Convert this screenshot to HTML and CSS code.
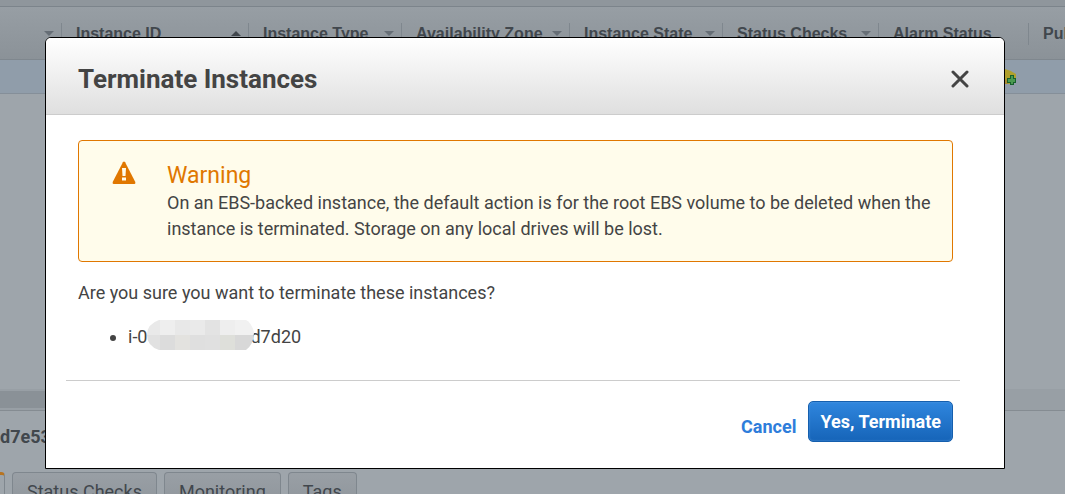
FILE: index.html
```
<!DOCTYPE html>
<html lang="en">
<head>
<meta charset="utf-8">
<title>Terminate Instances</title>
<meta name="viewport" content="width=device-width, initial-scale=1">
<link rel="stylesheet" href="styles.css">
</head>
<body>
<div class="console">
  <div class="toolbar"></div>
  <table class="grid">
    <colgroup>
      <col class="col-name"><col class="col-id"><col class="col-type"><col class="col-zone"><col class="col-state"><col class="col-checks"><col class="col-alarm"><col>
    </colgroup>
    <thead>
      <tr>
        <th scope="col" aria-label="Name"><div class="head"><span></span><i class="sort"></i></div></th>
        <th scope="col"><div class="head"><span>Instance ID</span><i class="sort up"></i></div></th>
        <th scope="col"><div class="head"><span>Instance Type</span><i class="sort"></i></div></th>
        <th scope="col"><div class="head"><span>Availability Zone</span><i class="sort"></i></div></th>
        <th scope="col"><div class="head"><span>Instance State</span><i class="sort"></i></div></th>
        <th scope="col"><div class="head"><span>Status Checks</span><i class="sort"></i></div></th>
        <th scope="col"><div class="head"><span>Alarm Status</span></div></th>
        <th scope="col"><div class="head last"><span>Public DNS</span></div></th>
      </tr>
    </thead>
    <tbody>
      <tr>
        <td></td><td></td><td></td><td></td><td></td><td></td>
        <td class="alarm">
          <svg class="bell" width="20" height="18" viewBox="0 0 20 18" aria-hidden="true">
            <path d="M1 16V8Q2 1 9 1Q14 2 20 6V12L14 16Z" fill="#b0a02c"/>
            <path d="M1 16V13L12 11V16Z" fill="#a98a32"/>
            <path d="M14 7h4v3h2v5h-2v2h-4v-2h-3v-5h3Z" fill="#17602d"/>
            <path d="M15 8h2v3h2v3h-2v2h-2v-2h-3v-3h3Z" fill="#4a9a50"/>
          </svg>
        </td>
        <td></td>
      </tr>
    </tbody>
  </table>
  <div class="empty"></div>
  <div class="scrollbar"><div class="thumb"></div></div>
  <section class="details">
    <p class="selected">d7e53</p>
    <nav class="tabs">
      <span class="tab current"></span>
      <a class="tab" href="#checks">Status Checks</a>
      <a class="tab" href="#monitoring">Monitoring</a>
      <a class="tab" href="#tags">Tags</a>
    </nav>
  </section>
</div>

<div class="overlay">
  <div class="dialog" role="dialog" aria-modal="true" aria-labelledby="dialog-title">
    <header class="dialog-head">
      <h1 id="dialog-title">Terminate Instances</h1>
      <button class="close" type="button" aria-label="Close">
        <svg width="18" height="18" viewBox="0 0 18 18" aria-hidden="true"><path d="M2 2L16 16M16 2L2 16" stroke="#444" stroke-width="3" stroke-linecap="round"/></svg>
      </button>
    </header>
    <div class="dialog-body">
      <div class="warning" role="alert">
        <svg class="warning-icon" width="24" height="24" viewBox="0 0 24 24" aria-hidden="true">
          <path d="M10.900 1.200Q12 0 13.100 1.200L23.300 21Q23.700 23 22.500 23H1.500Q.3 23 .7 21Z" fill="#e07700"/>
          <path d="M10 7h4l-.5 8h-3ZM10 16.500h4v3h-4Z" fill="#fffceb"/>
        </svg>
        <div>
          <h2>Warning</h2>
          <p>On an EBS-backed instance, the default action is for the root EBS volume to be deleted when the instance is terminated. Storage on any local drives will be lost.</p>
        </div>
      </div>
      <p class="question">Are you sure you want to terminate these instances?</p>
      <ul class="instances">
        <li><span class="instance"><span>i-0</span><svg class="mask" width="107" height="30" viewBox="0 0 107 30" aria-hidden="true">
          <defs><clipPath id="pill"><path d="M12 0H99Q104 2 107 12Q107 24 99 30H12Q0 26 0 15Q0 4 12 0Z"/></clipPath></defs>
          <g clip-path="url(#pill)">
            <path d="M0 0h13v15H0Z" fill="#e9e9e9"/><path d="M13 0h15v15H13Z" fill="#eee"/><path d="M28 0h15v15H28Z" fill="#e8e8e8"/><path d="M43 0h15v15H43Z" fill="#eaeaea"/><path d="M58 0h15v15H58Z" fill="#e3e3e3"/><path d="M73 0h15v15H73Z" fill="#eee"/><path d="M88 0h19v15H88Z" fill="#f1f1f1"/>
            <path d="M0 15h13v15H0Z" fill="#e1e1e1"/><path d="M13 15h15v15H13Z" fill="#dcdcdc"/><path d="M28 15h15v15H28Z" fill="#e3e2df"/><path d="M43 15h15v15H43Z" fill="#dfdfdf"/><path d="M58 15h15v15H58Z" fill="#e0e0e0"/><path d="M73 15h15v15H73Z" fill="#dedfda"/><path d="M88 15h19v15H88Z" fill="#d8d8d8"/>
          </g>
        </svg><span class="tail">d7d20</span></span></li>
      </ul>
    </div>
    <footer class="dialog-foot">
      <a class="cancel" href="#cancel">Cancel</a>
      <button class="confirm" type="button">Yes, Terminate</button>
    </footer>
  </div>
</div>
</body>
</html>
```
FILE: styles.css
```
* { box-sizing: border-box; }
html, body { height: 100%; }
body {
  margin: 0;
  overflow: hidden;
  background: #9ea5ab;
  color: #444;
  font: 18px/26px Roboto, "Liberation Sans", sans-serif;
}
h1, h2, p, ul { margin: 0; padding: 0; }

.toolbar { height: 7px; background: #8f969c; border-bottom: 1px solid #7c848b; }

.grid {
  width: 100%;
  table-layout: fixed;
  border-collapse: separate;
  border-spacing: 0;
  font: bold 16px/20px "Liberation Sans", Arial, sans-serif;
  color: #41474d;
}
.col-name { width: 62px; }
.col-id { width: 187px; }
.col-type, .col-state { width: 153px; }
.col-zone { width: 168px; }
.col-checks { width: 156px; }
.col-alarm { width: 150px; }
.grid th {
  height: 53px;
  padding: 1px 0 0;
  text-align: left;
  vertical-align: middle;
  border-bottom: 1px solid #7f878e;
  background: linear-gradient(#979ea4, #8b9298);
}
.head {
  display: flex;
  align-items: center;
  justify-content: space-between;
  height: 22px;
  padding: 0 7px 0 14px;
  border-right: 1px solid #7f878e;
  box-shadow: 1px 0 #a0a7ad;
  white-space: nowrap;
  overflow: hidden;
}
.last { border: 0; box-shadow: none; }
.sort { border: 5px solid transparent; border-top-color: #666e76; border-bottom: 0; }
.sort.up { border-top: 0; border-bottom: 5px solid #41474d; }
.grid td { height: 34px; padding: 0; background: #909daa; border-bottom: 1px solid #858f99; }
.alarm { text-align: right; }
.bell { display: block; margin: 0 13px 0 auto; }

.empty { height: 295px; }
.scrollbar { height: 22px; padding: 2px 0 3px; background: #989fa5; border-bottom: 1px solid #858c92; }
.thumb { width: 80%; height: 17px; background: #8a9197; }
.details { color: #41474d; }
.selected { height: 61px; padding-top: 13px; font-weight: bold; }
.tabs { display: flex; gap: 7px; }
.tab {
  height: 40px;
  padding: 6px 14px;
  color: #41474d;
  text-decoration: none;
  background: linear-gradient(#999fa5, #8d949a);
  border: 1px solid #7f878e;
  border-bottom: 0;
  border-radius: 4px 4px 0 0;
}
.current { width: 5px; padding: 0; background: #9ea5ab; border-top: 3px solid #b77421; border-left: 0; border-radius: 0 4px 0 0; }

.overlay { position: absolute; inset: 0; padding: 37px 60px 25px 45px; }
.dialog {
  overflow: hidden;
  background: #fff;
  border: 1px solid #000;
  border-radius: 6px 6px 0 0;
}
.dialog-head {
  display: flex;
  align-items: center;
  justify-content: space-between;
  height: 77px;
  padding: 6px 31px 0 32px;
  background: linear-gradient(#fff, #dfdfdf);
  border-bottom: 1px solid #ccc;
}
h1 { font-size: 26px; line-height: 32px; font-weight: bold; }
.close { display: flex; padding: 4px; border: 0; background: none; cursor: pointer; }
.dialog-body { padding: 25px 51px 0 32px; }
.warning {
  display: flex;
  gap: 31px;
  padding: 20px 16px 19px 33px;
  background: #fffceb;
  border: 1px solid #e07700;
  border-radius: 4px;
}
.warning-icon { flex: none; }
h2 { font-size: 23px; line-height: 29px; font-weight: normal; color: #e07700; }
.question { margin-top: 18px; }
.instances { margin-top: 14px; padding-left: 50px; list-style: none; }
.instances li { display: flex; align-items: center; height: 30px; }
.instances li::before { content: ""; width: 6px; height: 6px; margin: 5px 12px 0 -18px; border-radius: 50%; background: #444; }
.instance { display: flex; align-items: center; padding-top: 3px; }
.mask { position: relative; margin: -3px -4px 0 0; }
.dialog-foot {
  display: flex;
  align-items: center;
  justify-content: flex-end;
  gap: 12px;
  margin: 30px 44px 0 20px;
  padding: 20px 7px 26px;
  border-top: 1px solid #ccc;
}
.cancel { padding-top: 10px; font-weight: bold; color: #2e7ddb; text-decoration: none; }
.confirm {
  height: 41px;
  padding: 0 11px;
  font: bold 18px/26px Roboto, "Liberation Sans", sans-serif;
  color: #fff;
  background: linear-gradient(#2f86de, #1664b8);
  border: 1px solid #155fae;
  border-radius: 5px;
  box-shadow: inset 0 0 2px #5b9de0;
  cursor: pointer;
}
```
